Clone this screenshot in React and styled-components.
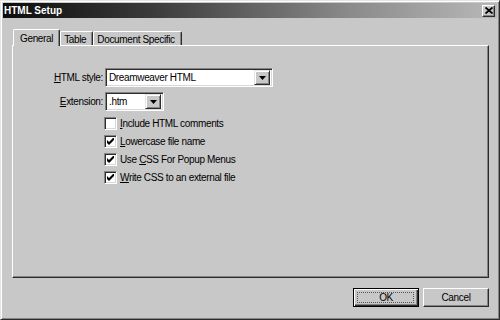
import styled, { createGlobalStyle } from "styled-components"

const GlobalStyle = createGlobalStyle`
  html, body {
    margin: 0;
    padding: 0;
    background: #c8c8c8;
  }
  body {
    font-family: "Liberation Sans", Arial, sans-serif;
    font-size: 10px;
    letter-spacing: -0.35px;
    color: #000;
  }
`

const Window = styled.div`
  box-sizing: border-box;
  width: 500px;
  height: 320px;
  padding: 2px;
  background: #c8c8c8;
  border: 1px solid;
  border-color: #e4e4e4 #2c2c2c #2c2c2c #e4e4e4;
  box-shadow: inset 1px 1px #ffffff, inset -1px -1px #848484;
  display: flex;
  flex-direction: column;
`

const TitleBar = styled.div`
  height: 15px;
  display: flex;
  align-items: center;
  padding: 0 2px 0 1px;
  background: linear-gradient(90deg, #0c0c0c 0%, #3a3a3a 30%, #8a8a8a 70%, #b8b8b8 100%);
`

const Title = styled.span`
  color: #fff;
  font-weight: bold;
  font-size: 10px;
  letter-spacing: 0;
`

const CloseButton = styled.div`
  box-sizing: border-box;
  margin-left: auto;
  width: 13px;
  height: 12px;
  background: #c8c8c8;
  border: 1px solid;
  border-color: #fff #2c2c2c #2c2c2c #fff;
  box-shadow: inset -1px -1px #848484;
  display: flex;
  align-items: center;
  justify-content: center;
`

const Body = styled.div`
  flex: 1;
  display: flex;
  flex-direction: column;
  padding: 11px 8px 10px 9px;
`

const TabRow = styled.div`
  height: 16px;
  display: flex;
  align-items: flex-end;
  padding-left: 1px;
`

const Tab = styled.div`
  box-sizing: border-box;
  height: ${(p) => (p.$active ? "17px" : "14px")};
  margin-bottom: ${(p) => (p.$active ? "-1px" : "0")};
  position: relative;
  z-index: ${(p) => (p.$active ? 2 : 1)};
  padding: ${(p) => (p.$active ? "1px 6px 0 6px" : "1px 6px 0 3px")};
  background: #c8c8c8;
  border-top: 1px solid #fff;
  border-left: 1px solid #fff;
  border-right: 1px solid #2c2c2c;
  box-shadow: inset -1px 0 #848484;
  border-radius: 2px 2px 0 0;
  display: flex;
  align-items: center;
  white-space: nowrap;
`

const Panel = styled.div`
  flex: 1;
  border: 1px solid;
  border-color: #fff #2c2c2c #2c2c2c #fff;
  box-shadow: inset -1px -1px #848484;
  padding-top: 22px;
`

const Form = styled.div`
  display: grid;
  grid-template-columns: 90px auto;
  column-gap: 2px;
  row-gap: 5px;
  align-items: center;
  justify-items: start;
`

const Label = styled.span`
  justify-self: end;
  white-space: nowrap;
`

const Select = styled.div`
  box-sizing: border-box;
  width: ${(p) => p.$width}px;
  height: 19px;
  background: #fff;
  border: 1px solid;
  border-color: #848484 #fff #fff #848484;
  box-shadow: inset 1px 1px #2c2c2c, inset -1px -1px #d8d8d8;
  display: flex;
  align-items: center;
  padding: 2px;
`

const SelectText = styled.span`
  flex: 1;
  padding-left: 1px;
  white-space: nowrap;
`

const DropButton = styled.div`
  box-sizing: border-box;
  width: 16px;
  height: 15px;
  background: #c8c8c8;
  border: 1px solid;
  border-color: #e4e4e4 #2c2c2c #2c2c2c #e4e4e4;
  box-shadow: inset 1px 1px #fff, inset -1px -1px #848484;
  display: flex;
  align-items: center;
  justify-content: center;
`

const Checks = styled.div`
  grid-column: 2;
  margin-left: -1px;
  margin-top: 1px;
  display: flex;
  flex-direction: column;
  gap: 5px;
`

const CheckRow = styled.div`
  display: flex;
  align-items: center;
  gap: 2px;
  height: 13px;
`

const Box = styled.div`
  box-sizing: border-box;
  width: 13px;
  height: 13px;
  background: #fff;
  border: 1px solid;
  border-color: #848484 #fff #fff #848484;
  box-shadow: inset 1px 1px #2c2c2c, inset -1px -1px #d8d8d8;
  display: flex;
  align-items: center;
  justify-content: center;
`

const CheckLabel = styled.span`
  padding-left: 1px;
  white-space: nowrap;
`

const Buttons = styled.div`
  display: flex;
  justify-content: flex-end;
  gap: 4px;
  margin-top: 10px;
`

const Button = styled.div`
  box-sizing: border-box;
  width: 66px;
  height: 19px;
  background: #c8c8c8;
  border: 1px solid;
  border-color: ${(p) => (p.$default ? "#000" : "#fff #2c2c2c #2c2c2c #fff")};
  box-shadow: ${(p) =>
    p.$default
      ? "inset 1px 1px #fff, inset -1px -1px #2c2c2c, inset -2px -2px #848484"
      : "inset -1px -1px #848484"};
  display: flex;
  align-items: center;
  justify-content: center;
  position: relative;
`

const Focus = styled.div`
  position: absolute;
  inset: 3px 4px 3px 3px;
  border: 1px dotted #555;
`

const Arrow = () => (
  <svg width="7" height="4" viewBox="0 0 7 4">
    <path d="M0 0H7L3.5 4Z" fill="#000" />
  </svg>
)

const Check = () => (
  <svg width="7" height="7" viewBox="0 0 7 7">
    <path d="M0 2L2 4L7 -1V2L2 7L0 5Z" fill="#000" />
  </svg>
)

const CheckBox = ({ checked, children }) => (
  <CheckRow>
    <Box>{checked && <Check />}</Box>
    <CheckLabel>{children}</CheckLabel>
  </CheckRow>
)

export default function App() {
  return (
    <>
      <GlobalStyle />
      <Window>
        <TitleBar>
          <Title>HTML Setup</Title>
          <CloseButton>
            <svg width="8" height="7" viewBox="0 0 8 7">
              <path d="M0.5 0.5L7.5 6.5M7.5 0.5L0.5 6.5" stroke="#000" strokeWidth="1.8" />
            </svg>
          </CloseButton>
        </TitleBar>
        <Body>
          <TabRow>
            <Tab $active>General</Tab>
            <Tab>Table</Tab>
            <Tab>Document Specific</Tab>
          </TabRow>
          <Panel>
            <Form>
              <Label>
                <u>H</u>TML style:
              </Label>
              <Select $width={168}>
                <SelectText>Dreamweaver HTML</SelectText>
                <DropButton>
                  <Arrow />
                </DropButton>
              </Select>
              <Label>
                <u>E</u>xtension:
              </Label>
              <Select $width={59}>
                <SelectText>.htm</SelectText>
                <DropButton>
                  <Arrow />
                </DropButton>
              </Select>
              <Checks>
                <CheckBox>
                  <u>I</u>nclude HTML comments
                </CheckBox>
                <CheckBox checked>
                  <u>L</u>owercase file name
                </CheckBox>
                <CheckBox checked>
                  Use <u>C</u>SS For Popup Menus
                </CheckBox>
                <CheckBox checked>
                  <u>W</u>rite CSS to an external file
                </CheckBox>
              </Checks>
            </Form>
          </Panel>
          <Buttons>
            <Button $default>
              <Focus />
              OK
            </Button>
            <Button>Cancel</Button>
          </Buttons>
        </Body>
      </Window>
    </>
  )
}
